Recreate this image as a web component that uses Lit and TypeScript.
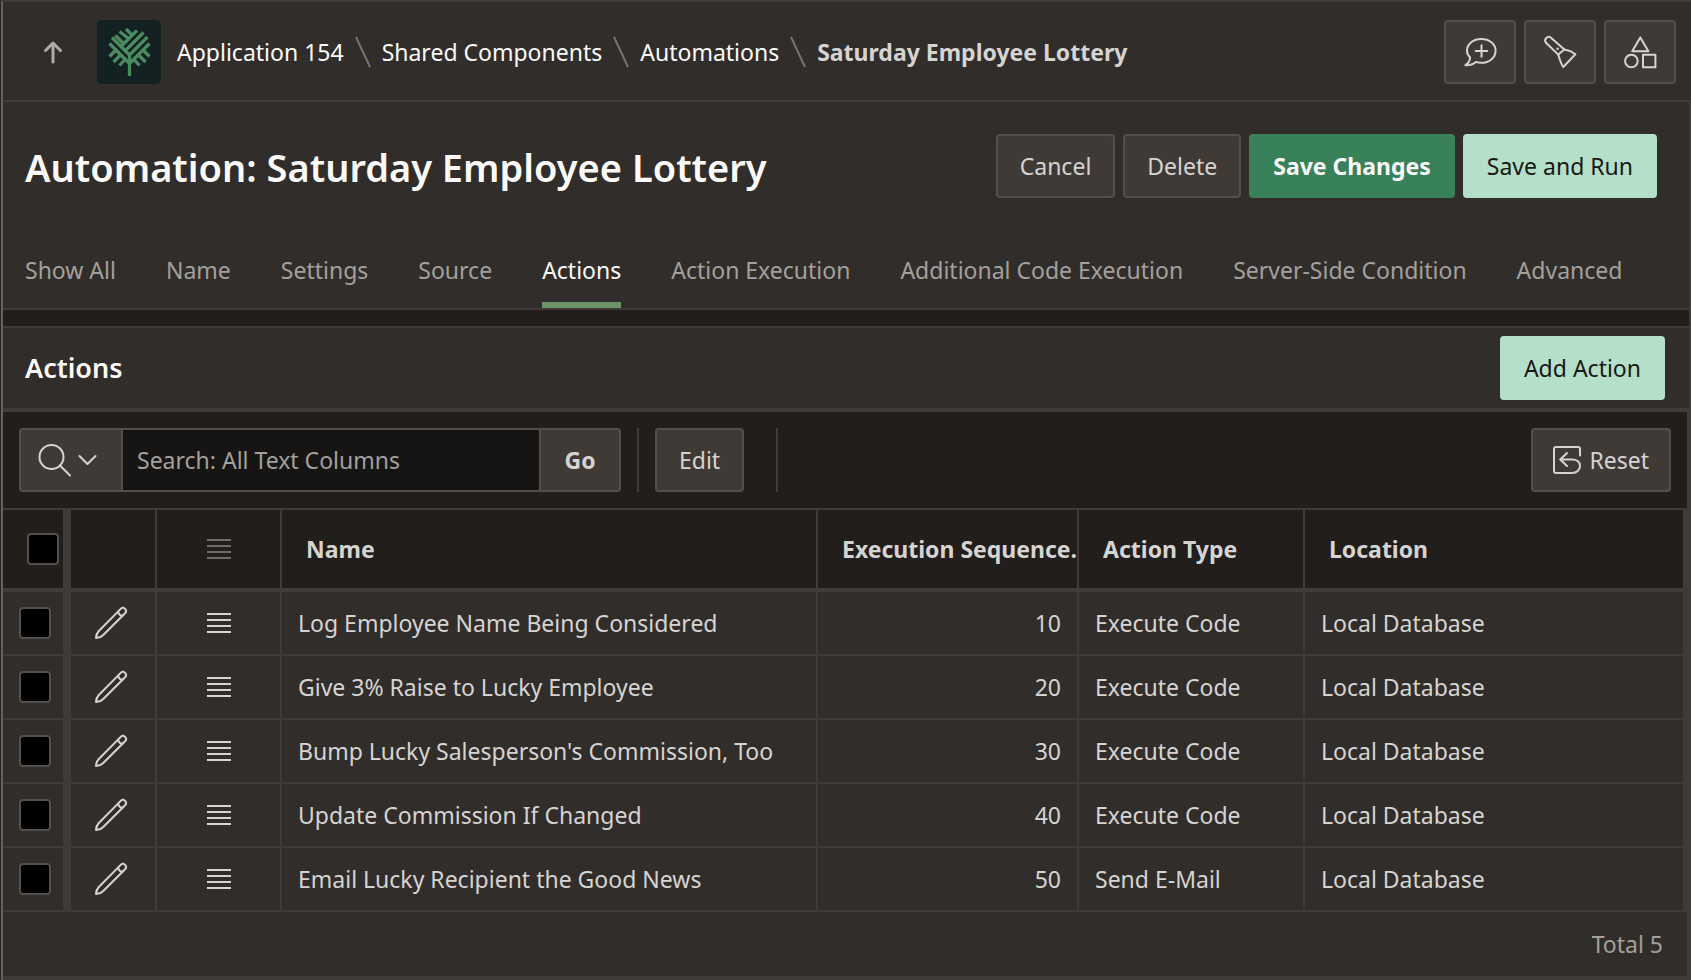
import { LitElement, html, css, svg, nothing } from "lit";
import { customElement } from "lit/decorators.js";
import { classMap } from "lit/directives/class-map.js";

interface ActionRow {
  name: string;
  sequence: number;
  type: string;
  location: string;
}

const ROWS: ActionRow[] = [
  { name: "Log Employee Name Being Considered", sequence: 10, type: "Execute Code", location: "Local Database" },
  { name: "Give 3% Raise to Lucky Employee", sequence: 20, type: "Execute Code", location: "Local Database" },
  { name: "Bump Lucky Salesperson's Commission, Too", sequence: 30, type: "Execute Code", location: "Local Database" },
  { name: "Update Commission If Changed", sequence: 40, type: "Execute Code", location: "Local Database" },
  { name: "Email Lucky Recipient the Good News", sequence: 50, type: "Send E-Mail", location: "Local Database" },
];

const TABS = [
  "Show All",
  "Name",
  "Settings",
  "Source",
  "Actions",
  "Action Execution",
  "Additional Code Execution",
  "Server-Side Condition",
  "Advanced",
];

const CRUMBS = ["Application 154", "Shared Components", "Automations"];

const icon = (size: number, content: unknown) => html`
  <svg class="icon" width=${size} height=${size} viewBox="0 0 ${size} ${size}" aria-hidden="true">${content}</svg>
`;

const arrowUp = icon(24, svg`<path class="thick" d="M12 22V3M4.500 10.500 12 3l7.500 7.500" />`);
const comment = icon(32, svg`
  <path d="M6.2 21.4C4 19.6 3 17.200 3 14.800 3 7.800 9.400 3 17.300 3S31.600 7.800 31.600 14.800 25.200 26.800 17.300 26.800c-2 0-3.800-.2-5.400-.9C9 28.400 5 29.400 1.400 29.200 4.400 27.600 5.800 25 6.200 21.400z" />
  <path d="M17.500 9.200v11.600M11.700 15h11.600" />`);
const flashlight = icon(32, svg`
  <path d="M14.300 18.600 2 6.800C-.6 3.600 3.600-1 7 1.800L20.400 13.600z" />
  <path d="M20.400 13.600c3.600.6 7.600 2 11 4.600L19.300 31c-2.600-3.600-3.600-8-5-12.400" />
  <circle class="solid" cx="13.600" cy="12.800" r="1.200" />`);
const shapes = icon(32, svg`
  <path d="M16.300 1.400 24.400 15.200H8.200z" />
  <circle cx="7.400" cy="25" r="6.300" />
  <rect x="19" y="18.800" width="12.400" height="12.400" />`);
const magnifier = icon(32, svg`<circle cx="13.500" cy="13" r="12" /><path d="M22 21.500 32 31.500" />`);
const chevron = icon(20, svg`<path d="M1.500 6l8 8 8-8" />`);
const reset = icon(28, svg`
  <path d="M27 9.500V3q0-2-2-2H3Q1 1 1 3v22q0 2 2 2h16c4.600 0 8-2.800 8-7s-3.400-6.600-8-6.600H7.500" />
  <path d="M14 7l-6.700 6.500L14 20" />`);
const pencil = icon(32, svg`
  <path d="M1 31c.2-3 .9-5.100 2.800-7L25.700 1.900a3.100 3.100 0 0 1 4.400 4.400L8 28.200C6.100 30.100 4 30.800 1 31z" />
  <path d="M23.200 4.400c.2 2.600 1.700 4.200 4.400 4.400" />`);
const lines = icon(24, svg`<path class="bars" d="M0 3h24M0 9h24M0 15h24M0 21h24" />`);

const treeLogo = html`
  <svg class="logo" viewBox="0 0 64 64" role="img" aria-label="Application logo">
    <rect class="logo-tile" width="64" height="64" rx="5" />
    <path class="logo-tree" d="
      M32.500 56V33
      M32.500 35 15 17.500
      M32.500 35 50.500 17
      M32.500 43.500 12.500 23.500
      M32.500 43.500 52.500 23.500
      M28.500 30.500 46.500 12.500
      M24 26.500 40 10.500
      M26 23 18.500 15.500
      M31.500 18.500 22.500 11.500
      M34.500 14.500 29 9
      M19 30 12.500 36.500
      M24 34.500 16.500 42
      M28.500 39 22.500 45.500
      M46 30 52.500 36.500
      M41 34.500 48.500 42
      M36.500 39 42.500 45.500" />
  </svg>
`;

@customElement("app-root")
export class AppRoot extends LitElement {
  static styles = css`
    :host {
      --surface: #312d2a;
      --deep: #221e1b;
      --line: #403b38;
      --control: #403a37;
      --control-line: #544f4b;
      --text: #d6d4d2;
      --muted: #a3a09d;
      --mint: #b4dfc8;
      display: block;
      box-sizing: border-box;
      border-left: 1px solid #2a2623;
      background: var(--surface);
      color: var(--text);
      font-family: "Noto Sans", "Open Sans", sans-serif;
      font-size: 23px;
      line-height: 32px;
    }
    * {
      box-sizing: border-box;
    }
    .frame {
      min-height: 100vh;
      border-left: 2px solid #63605d;
      border-top: 2px solid var(--line);
    }
    h1,
    h2 {
      margin: 0;
      color: #fcfbfa;
      font-weight: 600;
    }
    h1 {
      font-size: 38px;
      line-height: 56px;
      padding-top: 2px;
    }
    h2 {
      font-size: 27px;
    }
    .icon {
      display: block;
      flex: none;
      fill: none;
      stroke: currentColor;
      stroke-width: 2;
      stroke-linejoin: round;
      stroke-linecap: round;
      overflow: visible;
    }
    .thick {
      stroke-width: 3;
    }
    .bars {
      stroke-linecap: butt;
    }
    .solid {
      fill: currentColor;
      stroke: none;
    }
    .topbar {
      display: flex;
      align-items: center;
      justify-content: space-between;
      padding: 18px 15px 16px 38px;
      border-bottom: 2px solid var(--line);
    }
    .trail,
    .crumbs,
    .buttons {
      display: flex;
      align-items: center;
    }
    .up {
      display: flex;
      margin-right: 32px;
      color: #aeaba8;
    }
    .logo {
      display: block;
      width: 64px;
      height: 64px;
      margin-right: 16px;
    }
    .logo-tile {
      fill: #142122;
    }
    .logo-tree {
      fill: none;
      stroke: #4b8b60;
      stroke-width: 3.300;
    }
    .crumbs {
      list-style: none;
      margin: 0;
      padding: 0;
    }
    .crumb {
      display: flex;
      align-items: center;
      white-space: nowrap;
    }
    .crumb a {
      color: #fcfbfa;
      text-decoration: none;
    }
    .crumb-current {
      font-weight: 700;
    }
    .slash {
      width: 16px;
      height: 32px;
      margin: 0 11px;
      fill: none;
      stroke: #77736f;
      stroke-width: 2;
    }
    .buttons {
      gap: 8px;
    }
    .btn {
      display: flex;
      align-items: center;
      justify-content: center;
      gap: 8px;
      height: 64px;
      padding: 0 22px;
      border: 2px solid var(--control-line);
      border-radius: 4px;
      background: var(--control);
      color: var(--text);
      font: inherit;
      white-space: nowrap;
      cursor: pointer;
    }
    .btn-square {
      width: 72px;
      padding: 0;
    }
    .btn-compact {
      padding: 0 20px;
    }
    .btn-primary {
      border-color: #388159;
      background: #388159;
      color: #fcfbfa;
      font-weight: 700;
    }
    .btn-mint {
      border-color: var(--mint);
      background: var(--mint);
      color: #1a1816;
    }
    .page {
      border-right: 2px solid var(--line);
    }
    .title-row {
      display: flex;
      align-items: center;
      justify-content: space-between;
      padding: 32px 32px 32px 22px;
    }
    .tabs {
      display: flex;
      gap: 50px;
      padding: 24px 22px 0;
      border-bottom: 2px solid var(--line);
    }
    .tab {
      height: 54px;
      border-bottom: 6px solid transparent;
      color: var(--muted);
      text-decoration: none;
      white-space: nowrap;
    }
    .tab-active {
      border-color: #6b9469;
      color: #fcfbfa;
    }
    .divider {
      height: 16px;
      background: var(--deep);
    }
    .region-head {
      display: flex;
      align-items: center;
      justify-content: space-between;
      padding: 8px 24px 8px 22px;
      border-top: 2px solid var(--line);
      border-bottom: 4px solid var(--line);
    }
    .grid {
      border-right: 2px solid var(--line);
      border-bottom: 4px solid var(--line);
    }
    .toolbar {
      display: flex;
      align-items: center;
      padding: 16px;
      background: var(--deep);
      border-bottom: 2px solid var(--line);
    }
    .search {
      display: flex;
      width: 602px;
    }
    .search-menu {
      width: 104px;
      border-radius: 4px 0 0 4px;
      padding: 0 6px 0 0;
    }
    .search-box {
      flex: 1;
      min-width: 0;
      height: 64px;
      padding: 0 14px;
      border: solid var(--control-line);
      border-width: 2px 0;
      background: #161513;
      color: var(--text);
      font: inherit;
      outline: none;
    }
    .search-box::placeholder {
      color: var(--muted);
      opacity: 1;
    }
    .search-go {
      width: 82px;
      border-radius: 0 4px 4px 0;
      font-weight: 700;
    }
    .rule {
      width: 2px;
      height: 64px;
      margin: 0 16px;
      background: var(--line);
    }
    .rule-last {
      margin-left: 32px;
    }
    .reset {
      margin-left: auto;
    }
    .table {
      width: 100%;
      table-layout: fixed;
      border-spacing: 0;
      border-right: 4px solid var(--line);
    }
    .col-check {
      width: 68px;
    }
    .col-edit {
      width: 86px;
    }
    .col-menu {
      width: 125px;
    }
    .col-name {
      width: 536px;
    }
    .col-seq {
      width: 261px;
    }
    .col-type {
      width: 226px;
    }
    th,
    td {
      height: 64px;
      padding: 0 16px;
      border-right: 2px solid var(--line);
      border-bottom: 2px solid var(--line);
      text-align: left;
      white-space: nowrap;
      overflow: hidden;
    }
    th {
      height: 82px;
      padding: 0 0 0 24px;
      border-bottom-width: 4px;
      background: var(--deep);
      font-weight: 700;
    }
    th:last-child,
    td:last-child {
      border-right: 0;
    }
    .cell-check {
      padding: 0 0 0 16px;
      border-right-width: 8px;
    }
    th.cell-check {
      padding-left: 24px;
    }
    .cell-icon {
      padding: 0;
    }
    .cell-edit {
      padding: 0 0 0 24px;
    }
    .icon-btn {
      display: flex;
      margin: 0 auto;
      padding: 0;
      border: 0;
      background: none;
      color: var(--text);
      cursor: pointer;
    }
    .cell-edit .icon-btn {
      margin: 0;
    }
    .dim {
      color: #716d6a;
    }
    .num {
      text-align: right;
    }
    .check {
      display: block;
      appearance: none;
      width: 32px;
      height: 32px;
      margin: 0;
      border: 2px solid var(--control-line);
      border-radius: 4px;
      background: #000;
    }
    .total {
      padding: 16px 24px;
      color: var(--muted);
      text-align: right;
    }
  `;

  private slash() {
    return html`<svg class="slash" viewBox="0 0 16 32" aria-hidden="true"><path d="M1 1 15 31" /></svg>`;
  }

  private renderTopbar() {
    return html`
      <header class="topbar">
        <div class="trail">
          <a class="up" href="#" aria-label="Up">${arrowUp}</a>
          ${treeLogo}
          <nav aria-label="Breadcrumb">
            <ol class="crumbs">
              ${CRUMBS.map((c) => html`<li class="crumb"><a href="#">${c}</a>${this.slash()}</li>`)}
              <li class="crumb crumb-current">Saturday Employee Lottery</li>
            </ol>
          </nav>
        </div>
        <div class="buttons">
          <button class="btn btn-square" aria-label="Comments">${comment}</button>
          <button class="btn btn-square" aria-label="Spotlight search">${flashlight}</button>
          <button class="btn btn-square" aria-label="Shared components">${shapes}</button>
        </div>
      </header>
    `;
  }

  private renderToolbar() {
    return html`
      <div class="toolbar">
        <div class="search">
          <button class="btn search-menu" aria-label="Select columns to search">${magnifier}${chevron}</button>
          <input class="search-box" type="text" aria-label="Search" placeholder="Search: All Text Columns" />
          <button class="btn search-go">Go</button>
        </div>
        <span class="rule"></span>
        <button class="btn">Edit</button>
        <span class="rule rule-last"></span>
        <button class="btn btn-compact reset">${reset}Reset</button>
      </div>
    `;
  }

  private renderTable() {
    return html`
      <table class="table">
        <colgroup>
          <col class="col-check" />
          <col class="col-edit" />
          <col class="col-menu" />
          <col class="col-name" />
          <col class="col-seq" />
          <col class="col-type" />
          <col />
        </colgroup>
        <thead>
          <tr>
            <th class="cell-check"><input class="check" type="checkbox" aria-label="Select all rows" /></th>
            <th class="cell-icon"></th>
            <th class="cell-icon"><button class="icon-btn dim" aria-label="Table actions">${lines}</button></th>
            <th scope="col">Name</th>
            <th scope="col">Execution Sequence.</th>
            <th scope="col">Action Type</th>
            <th scope="col">Location</th>
          </tr>
        </thead>
        <tbody>
          ${ROWS.map(
            (r) => html`
              <tr>
                <td class="cell-check"><input class="check" type="checkbox" aria-label="Select ${r.name}" /></td>
                <td class="cell-edit"><button class="icon-btn" aria-label="Edit ${r.name}">${pencil}</button></td>
                <td class="cell-icon"><button class="icon-btn" aria-label="Row actions">${lines}</button></td>
                <td>${r.name}</td>
                <td class="num">${r.sequence}</td>
                <td>${r.type}</td>
                <td>${r.location}</td>
              </tr>
            `
          )}
        </tbody>
      </table>
    `;
  }

  render() {
    return html`
      <div class="frame">
        ${this.renderTopbar()}
        <main class="page">
          <div class="title-row">
            <h1>Automation: Saturday Employee Lottery</h1>
            <div class="buttons">
              <button class="btn">Cancel</button>
              <button class="btn">Delete</button>
              <button class="btn btn-primary">Save Changes</button>
              <button class="btn btn-mint">Save and Run</button>
            </div>
          </div>
          <nav class="tabs" aria-label="Sections">
            ${TABS.map((t) => {
              const active = t === "Actions";
              return html`<a
                href="#"
                class=${classMap({ tab: true, "tab-active": active })}
                aria-current=${active ? "true" : nothing}
                >${t}</a
              >`;
            })}
          </nav>
          <div class="divider"></div>
          <section>
            <div class="region-head">
              <h2>Actions</h2>
              <button class="btn btn-mint">Add Action</button>
            </div>
            <div class="grid">
              ${this.renderToolbar()} ${this.renderTable()}
              <div class="total">Total ${ROWS.length}</div>
            </div>
          </section>
        </main>
      </div>
    `;
  }
}
